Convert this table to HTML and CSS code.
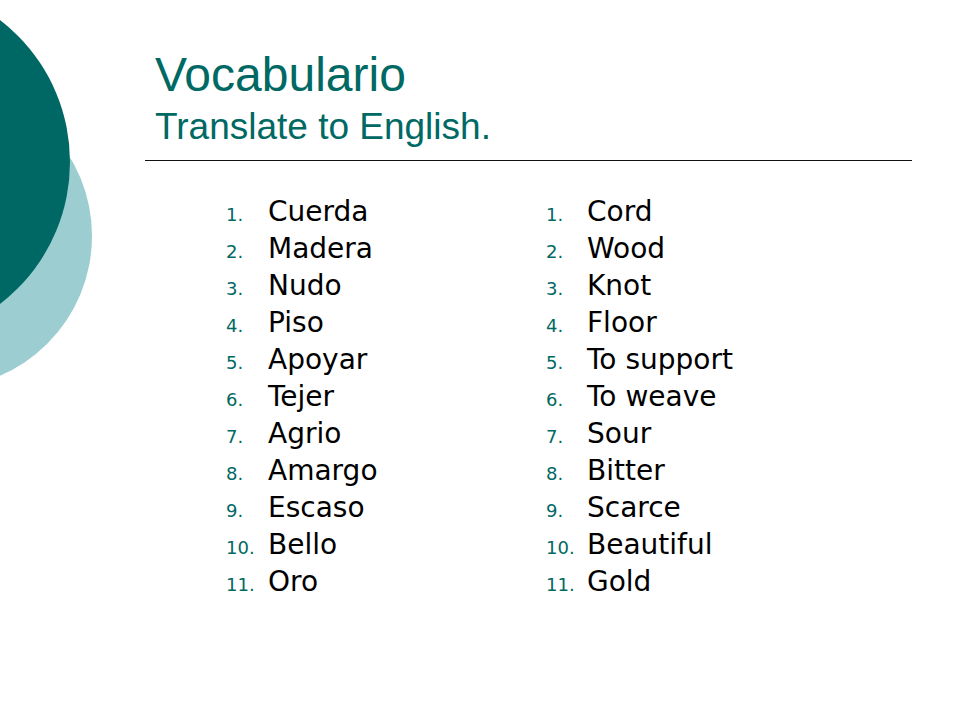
FILE: index.html
```html
<!DOCTYPE html>
<html>
<head>
<meta charset="utf-8">
<link rel="stylesheet" href="styles.css">
</head>
<body>
<div class="slide">
  <svg class="deco" width="100" height="400" viewBox="0 0 100 400">
    <circle cx="-60" cy="236" r="152" fill="#9ccdd0"/>
    <circle cx="-109" cy="162" r="179" fill="#006864"/>
  </svg>
  <header class="head">
    <h1 class="title">Vocabulario</h1>
    <h2 class="subtitle">Translate to English.</h2>
  </header>
  <div class="rule"></div>
  <div class="cols">
    <ol class="list list-es">
      <li><span class="num">1.</span><span class="word">Cuerda</span></li>
      <li><span class="num">2.</span><span class="word">Madera</span></li>
      <li><span class="num">3.</span><span class="word">Nudo</span></li>
      <li><span class="num">4.</span><span class="word">Piso</span></li>
      <li><span class="num">5.</span><span class="word">Apoyar</span></li>
      <li><span class="num">6.</span><span class="word">Tejer</span></li>
      <li><span class="num">7.</span><span class="word">Agrio</span></li>
      <li><span class="num">8.</span><span class="word">Amargo</span></li>
      <li><span class="num">9.</span><span class="word">Escaso</span></li>
      <li><span class="num">10.</span><span class="word">Bello</span></li>
      <li><span class="num">11.</span><span class="word">Oro</span></li>
    </ol>
    <ol class="list list-en">
      <li><span class="num">1.</span><span class="word">Cord</span></li>
      <li><span class="num">2.</span><span class="word">Wood</span></li>
      <li><span class="num">3.</span><span class="word">Knot</span></li>
      <li><span class="num">4.</span><span class="word">Floor</span></li>
      <li><span class="num">5.</span><span class="word">To support</span></li>
      <li><span class="num">6.</span><span class="word">To weave</span></li>
      <li><span class="num">7.</span><span class="word">Sour</span></li>
      <li><span class="num">8.</span><span class="word">Bitter</span></li>
      <li><span class="num">9.</span><span class="word">Scarce</span></li>
      <li><span class="num">10.</span><span class="word">Beautiful</span></li>
      <li><span class="num">11.</span><span class="word">Gold</span></li>
    </ol>
  </div>
</div>
</body>
</html>
```
FILE: styles.css
```css
html, body {
  margin: 0;
  padding: 0;
  background: #ffffff;
}
.slide {
  position: relative;
  width: 960px;
  height: 720px;
  overflow: hidden;
  background: #ffffff;
}
.deco {
  position: absolute;
  left: 0;
  top: 0;
}
.head {
  padding: 48px 0 0 155px;
  color: #006963;
  font-family: "Liberation Sans", Arial, sans-serif;
}
.title {
  margin: 0;
  font-size: 48px;
  font-weight: normal;
  line-height: 54px;
}
.subtitle {
  margin: 3px 0 0;
  font-size: 37px;
  font-weight: normal;
  line-height: 44px;
}
.rule {
  margin: 11px 48px 0 145px;
  height: 1px;
  background: #111111;
}
.cols {
  display: flex;
  padding: 34px 0 0 226px;
  gap: 0;
}
.list {
  list-style: none;
  margin: 0;
  padding: 0;
  font-family: "DejaVu Sans", Verdana, sans-serif;
}
.list-es {
  width: 320px;
}
.list li {
  display: flex;
  align-items: baseline;
  height: 37px;
}
.num {
  width: 42px;
  flex: none;
  color: #006963;
  font-size: 18px;
}
.list-en .num {
  width: 41px;
}
.word {
  font-size: 28px;
  color: #000000;
}
```
